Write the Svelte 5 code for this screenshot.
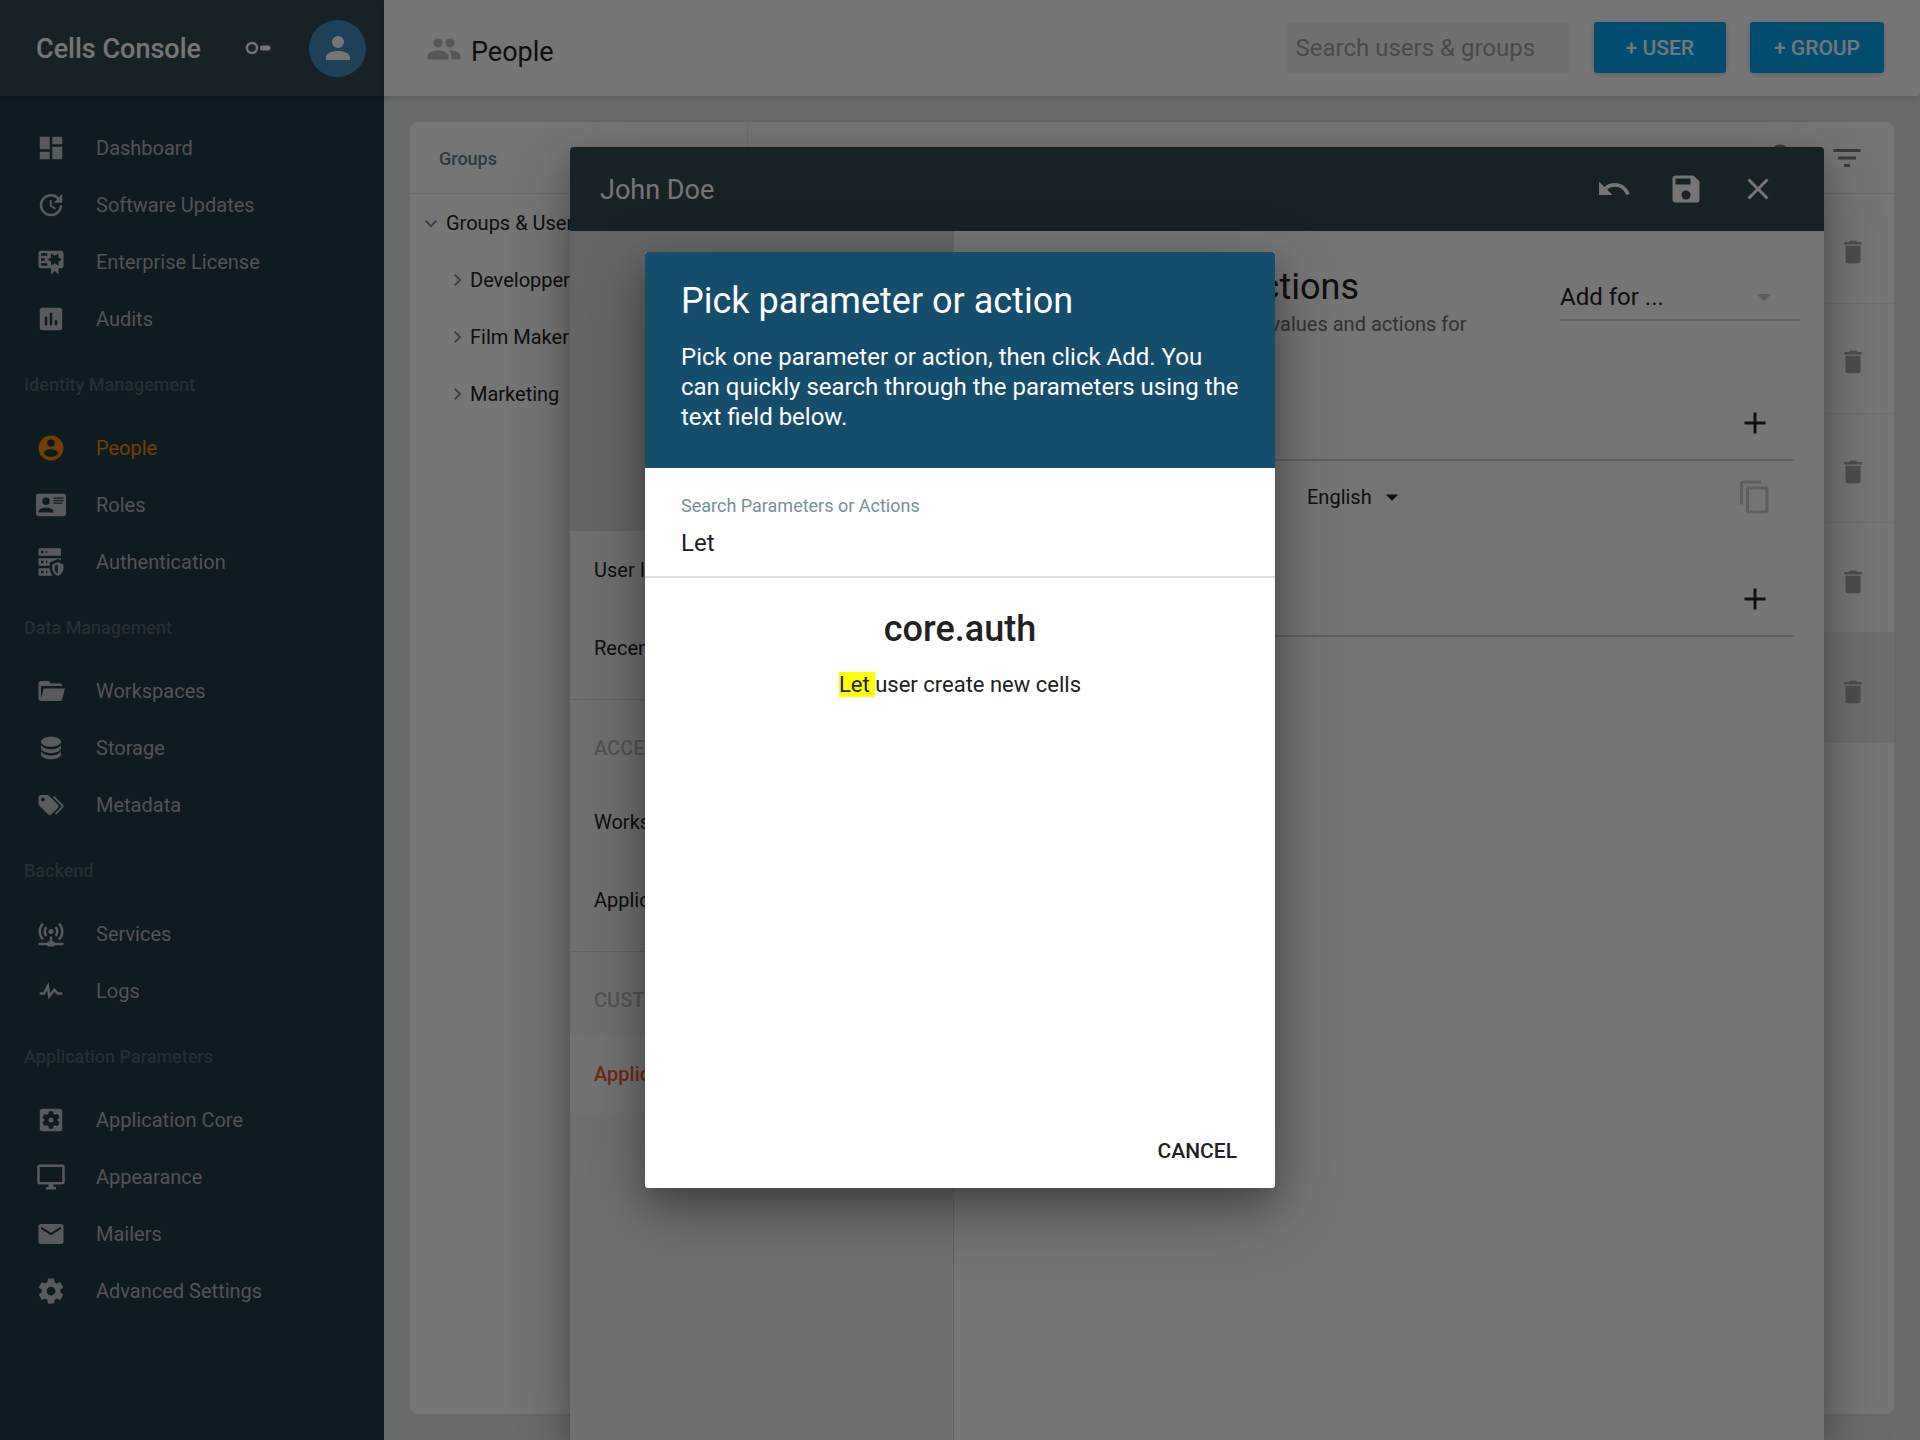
<script>
  const P = {
    dashboard: 'M13,3V9H21V3M13,21H21V11H13M3,21H11V15H3M3,13H11V3H3V13Z',
    update: 'M21,10.12H14.22L16.96,7.3C14.23,4.6 9.81,4.5 7.08,7.2C4.35,9.91 4.35,14.28 7.08,17C9.81,19.7 14.23,19.7 16.96,17C18.32,15.65 19,14.08 19,12.1H21C21,14.08 20.12,16.65 18.36,18.39C14.85,21.87 9.15,21.87 5.64,18.39C2.14,14.92 2.11,9.28 5.62,5.81C9.13,2.34 14.76,2.34 18.27,5.81L21,3V10.12M12.5,8V12.25L16,14.33L15.28,15.54L11,13V8H12.5Z',
    certificate: 'M4,3C2.89,3 2,3.89 2,5V15A2,2 0 0,0 4,17H12V22L15,19L18,22V17H20A2,2 0 0,0 22,15V5A2,2 0 0,0 20,3H4M12,5L15,7L18,5V8.5L21,10L18,11.5V15L15,13L12,15V11.5L9,10L12,8.5V5M4,5H9V7H4V5M4,9H7V11H4V9M4,13H9V15H4V13Z',
    chart: 'M9,17H7V10H9V17M13,17H11V7H13V17M17,17H15V13H17V17M19,3H5C3.89,3 3,3.89 3,5V19A2,2 0 0,0 5,21H19A2,2 0 0,0 21,19V5C21,3.89 20.1,3 19,3Z',
    account: 'M12,19.2C9.5,19.2 7.29,17.92 6,16C6.03,14 10,12.9 12,12.9C14,12.9 17.97,14 18,16C16.71,17.92 14.5,19.2 12,19.2M12,5A3,3 0 0,1 15,8A3,3 0 0,1 12,11A3,3 0 0,1 9,8A3,3 0 0,1 12,5M12,2A10,10 0 0,0 2,12A10,10 0 0,0 12,22A10,10 0 0,0 22,12C22,6.47 17.5,2 12,2Z',
    card: 'M2,3H22C23.05,3 24,3.95 24,5V19C24,20.05 23.05,21 22,21H2C0.95,21 0,20.05 0,19V5C0,3.95 0.95,3 2,3M14,6V7H22V6H14M14,8V9H22V8H14M14,10V11H21V10H14M8,13.91C6,13.91 2,15 2,17V18H14V17C14,15 10,13.91 8,13.91M8,6A3,3 0 0,0 5,9A3,3 0 0,0 8,12A3,3 0 0,0 11,9A3,3 0 0,0 8,6Z',
    server: 'M3,1H19A1,1 0 0,1 20,2V6A1,1 0 0,1 19,7H3A1,1 0 0,1 2,6V2A1,1 0 0,1 3,1M3,9H19A1,1 0 0,1 20,10V10.67L17.5,9.56L11,12.44V15H3A1,1 0 0,1 2,14V10A1,1 0 0,1 3,9M3,17H11C11.06,19.25 12,21.4 13.46,23H3A1,1 0 0,1 2,22V18A1,1 0 0,1 3,17M8,5H9V3H8V5M8,13H9V11H8V13M8,21H9V19H8V21M4,3V5H6V3H4M4,11V13H6V11H4M4,19V21H6V19H4M17.5,12L22,14V17C22,19.78 20.08,22.37 17.5,23C14.92,22.37 13,19.78 13,17V14L17.5,12M17.5,13.94L15,15.06V17.72C15,19.26 16.07,20.7 17.5,21.06V13.94Z',
    folder: 'M19,20H4C2.89,20 2,19.1 2,18V6C2,4.89 2.89,4 4,4H10L12,6H19A2,2 0 0,1 21,8L4,8V18L6.14,10H23.21L20.93,18.5C20.7,19.37 19.92,20 19,20Z',
    database: 'M12,3C7.58,3 4,4.79 4,7C4,9.21 7.58,11 12,11C16.42,11 20,9.21 20,7C20,4.79 16.42,3 12,3M4,9V12C4,14.21 7.58,16 12,16C16.42,16 20,14.21 20,12V9C20,11.21 16.42,13 12,13C7.58,13 4,11.21 4,9M4,14V17C4,19.21 7.58,21 12,21C16.42,21 20,19.21 20,17V14C20,16.21 16.42,18 12,18C7.58,18 4,16.21 4,14Z',
    tags: 'M5.5,9A1.5,1.5 0 0,0 7,7.5A1.5,1.5 0 0,0 5.5,6A1.5,1.5 0 0,0 4,7.5A1.5,1.5 0 0,0 5.5,9M17.41,11.58C17.77,11.94 18,12.44 18,13C18,13.55 17.78,14.05 17.41,14.41L12.41,19.41C12.05,19.77 11.55,20 11,20C10.45,20 9.95,19.78 9.58,19.41L2.59,12.42C2.22,12.05 2,11.55 2,11V6C2,4.89 2.89,4 4,4H9C9.55,4 10.05,4.22 10.41,4.58L17.41,11.58M13.54,5.71L14.54,4.71L21.41,11.58C21.78,11.94 22,12.45 22,13C22,13.55 21.78,14.05 21.42,14.41L16.04,19.79L15.04,18.79L20.75,13L13.54,5.71Z',
    services: 'M4.93,2.93C3.12,4.74 2,7.24 2,10C2,12.76 3.12,15.26 4.93,17.07L6.34,15.66C4.89,14.22 4,12.22 4,10C4,7.79 4.89,5.78 6.34,4.34L4.93,2.93M19.07,2.93L17.66,4.34C19.11,5.78 20,7.79 20,10C20,12.22 19.11,14.22 17.66,15.66L19.07,17.07C20.88,15.26 22,12.76 22,10C22,7.24 20.88,4.74 19.07,2.93M7.76,5.76C6.67,6.85 6,8.35 6,10C6,11.65 6.67,13.15 7.76,14.24L9.17,12.83C8.45,12.11 8,11.11 8,10C8,8.89 8.45,7.89 9.17,7.17L7.76,5.76M16.24,5.76L14.83,7.17C15.55,7.89 16,8.89 16,10C16,11.11 15.55,12.11 14.83,12.83L16.24,14.24C17.33,13.15 18,11.65 18,10C18,8.35 17.33,6.85 16.24,5.76M12,8A2,2 0 0,0 10,10A2,2 0 0,0 12,12A2,2 0 0,0 14,10A2,2 0 0,0 12,8M11,14V18H10A1,1 0 0,0 9,19H2V21H9A1,1 0 0,0 10,22H14A1,1 0 0,0 15,21H22V19H15A1,1 0 0,0 14,18H13V14H11Z',
    pulse: 'M3,13H5.79L10.1,4.79L11.28,13.75L14.5,9.66L17.83,13H21V15H17L14.67,12.67L9.92,18.73L8.94,11.31L7,15H3V13Z',
    gearbox: 'M17.25,12C17.25,12.23 17.23,12.46 17.2,12.68L18.68,13.84C18.81,13.95 18.85,14.13 18.76,14.29L17.36,16.71C17.27,16.86 17.09,16.92 16.93,16.86L15.19,16.16C14.83,16.44 14.43,16.67 14,16.85L13.75,18.7C13.72,18.87 13.57,19 13.4,19H10.6C10.43,19 10.28,18.87 10.25,18.7L10,16.85C9.56,16.67 9.17,16.44 8.81,16.16L7.07,16.86C6.91,16.92 6.73,16.86 6.64,16.71L5.24,14.29C5.15,14.13 5.19,13.95 5.32,13.84L6.8,12.68C6.77,12.46 6.75,12.23 6.75,12C6.75,11.77 6.77,11.54 6.8,11.32L5.32,10.16C5.19,10.05 5.15,9.86 5.24,9.71L6.64,7.29C6.73,7.13 6.91,7.07 7.07,7.13L8.81,7.84C9.17,7.56 9.56,7.32 10,7.15L10.25,5.29C10.28,5.13 10.43,5 10.6,5H13.4C13.57,5 13.72,5.13 13.75,5.29L14,7.15C14.43,7.32 14.83,7.56 15.19,7.84L16.93,7.13C17.09,7.07 17.27,7.13 17.36,7.29L18.76,9.71C18.85,9.86 18.81,10.05 18.68,10.16L17.2,11.32C17.23,11.54 17.25,11.77 17.25,12M19,3H5C3.89,3 3,3.89 3,5V19A2,2 0 0,0 5,21H19A2,2 0 0,0 21,19V5C21,3.89 20.1,3 19,3M12,10C10.89,10 10,10.89 10,12A2,2 0 0,0 12,14A2,2 0 0,0 14,12C14,10.89 13.1,10 12,10Z',
    monitor: 'M21,2H3A2,2 0 0,0 1,4V16A2,2 0 0,0 3,18H10V20H8V22H16V20H14V18H21A2,2 0 0,0 23,16V4A2,2 0 0,0 21,2M21,16H3V4H21V16Z',
    mail: 'M20,8L12,13L4,8V6L12,11L20,6V8M20,4H4C2.89,4 2,4.89 2,6V18A2,2 0 0,0 4,20H20A2,2 0 0,0 22,18V6C22,4.89 21.1,4 20,4Z',
    gear: 'M12,15.5A3.5,3.5 0 0,1 8.5,12A3.5,3.5 0 0,1 12,8.5A3.5,3.5 0 0,1 15.5,12A3.5,3.5 0 0,1 12,15.5M19.43,12.97C19.47,12.65 19.5,12.33 19.5,12C19.5,11.67 19.47,11.34 19.43,11L21.54,9.37C21.73,9.22 21.78,8.95 21.66,8.73L19.66,5.27C19.54,5.05 19.27,4.96 19.05,5.05L16.56,6.05C16.04,5.66 15.5,5.32 14.87,5.07L14.5,2.42C14.46,2.18 14.25,2 14,2H10C9.75,2 9.54,2.18 9.5,2.42L9.13,5.07C8.5,5.32 7.96,5.66 7.44,6.05L4.95,5.05C4.73,4.96 4.46,5.05 4.34,5.27L2.34,8.73C2.21,8.95 2.27,9.22 2.46,9.37L4.57,11C4.53,11.34 4.5,11.67 4.5,12C4.5,12.33 4.53,12.65 4.57,12.97L2.46,14.63C2.27,14.78 2.21,15.05 2.34,15.27L4.34,18.73C4.46,18.95 4.73,19.03 4.95,18.95L7.44,17.94C7.96,18.34 8.5,18.68 9.13,18.93L9.5,21.58C9.54,21.82 9.75,22 10,22H14C14.25,22 14.46,21.82 14.5,21.58L14.87,18.93C15.5,18.67 16.04,18.34 16.56,17.94L19.05,18.95C19.27,19.03 19.54,18.95 19.66,18.73L21.66,15.27C21.78,15.05 21.73,14.78 21.54,14.63L19.43,12.97Z',
    people: 'M16,13C15.71,13 15.38,13 15.03,13.05C16.19,13.89 17,15 17,16.5V19H23V16.5C23,14.17 18.33,13 16,13M8,13C5.67,13 1,14.17 1,16.5V19H15V16.5C15,14.17 10.33,13 8,13M8,11A3,3 0 0,0 11,8A3,3 0 0,0 8,5A3,3 0 0,0 5,8A3,3 0 0,0 8,11M16,11A3,3 0 0,0 19,8A3,3 0 0,0 16,5A3,3 0 0,0 13,8A3,3 0 0,0 16,11Z',
    person: 'M12,4A4,4 0 0,1 16,8A4,4 0 0,1 12,12A4,4 0 0,1 8,8A4,4 0 0,1 12,4M12,14C16.42,14 20,15.79 20,18V20H4V18C4,15.79 7.58,14 12,14Z',
    undo: 'M12.5,8C9.85,8 7.45,9 5.6,10.6L2,7V16H11L7.38,12.38C8.77,11.22 10.54,10.5 12.5,10.5C16.04,10.5 19.05,12.81 20.1,16L22.47,15.22C21.08,11.03 17.15,8 12.5,8Z',
    save: 'M15,9H5V5H15V9M12,19A3,3 0 0,1 9,16A3,3 0 0,1 12,13A3,3 0 0,1 15,16A3,3 0 0,1 12,19M17,3H5C3.89,3 3,3.9 3,5V19A2,2 0 0,0 5,21H19A2,2 0 0,0 21,19V7L17,3Z',
    close: 'M19,6.41L17.59,5L12,10.59L6.41,5L5,6.41L10.59,12L5,17.59L6.41,19L12,13.41L17.59,19L19,17.59L13.41,12L19,6.41Z',
    trash: 'M19,4H15.5L14.5,3H9.5L8.5,4H5V6H19V4M6,19A2,2 0 0,0 8,21H16A2,2 0 0,0 18,19V7H6V19Z',
    filter: 'M6,13H18V11H6V13M3,6V8H21V6H3M10,18H14V16H10V18Z',
    search: 'M9.5,3A6.5,6.5 0 0,1 16,9.5C16,11.11 15.41,12.59 14.44,13.73L14.71,14H15.5L20.5,19L19,20.5L14,15.5V14.71L13.73,14.44C12.59,15.41 11.11,16 9.5,16A6.5,6.5 0 0,1 3,9.5A6.5,6.5 0 0,1 9.5,3M9.5,5C7,5 5,7 5,9.5C5,12 7,14 9.5,14C12,14 14,12 14,9.5C14,7 12,5 9.5,5Z',
    copy: 'M19,21H8V7H19V21M19,5H8A2,2 0 0,0 6,7V21A2,2 0 0,0 8,23H19A2,2 0 0,0 21,21V7A2,2 0 0,0 19,5M16,1H4A2,2 0 0,0 2,3V17H4V3H16V1Z',
    plus: 'M19,13H13V19H11V13H5V11H11V5H13V11H19V13Z',
    chevronDown: 'M5,7.6L12,14.6L19,7.6L21,9.6L12,18.6L3,9.6Z',
    chevronRight: 'M7.6,5L14.6,12L7.6,19L9.6,21L18.6,12L9.6,3Z',
    caret: 'M7,10L12,15L17,10H7Z'
  };

  const menu = [
    { items: [['Dashboard', 'dashboard'], ['Software Updates', 'update'], ['Enterprise License', 'certificate'], ['Audits', 'chart']] },
    { title: 'Identity Management', items: [['People', 'account'], ['Roles', 'card'], ['Authentication', 'server']] },
    { title: 'Data Management', items: [['Workspaces', 'folder'], ['Storage', 'database'], ['Metadata', 'tags']] },
    { title: 'Backend', items: [['Services', 'services'], ['Logs', 'pulse']] },
    { title: 'Application Parameters', items: [['Application Core', 'gearbox'], ['Appearance', 'monitor'], ['Mailers', 'mail'], ['Advanced Settings', 'gear']] }
  ];
  const groups = ['Developpers', 'Film Makers', 'Marketing'];
  const rows = [1, 2, 3, 4, 5];
  const editorNav = [
    { items: ['User Information', 'Recent Activity'] },
    { title: 'ACCESS CONTROL', items: ['Workspaces', 'Application Pages'] },
    { title: 'CUSTOMIZATION', items: ['Application Parameters'] }
  ];
  let current = $state('People');
  let query = $state('Let');
</script>

{#snippet icon(name)}
  <svg class="icon" viewBox="0 0 24 24" aria-hidden="true"><path fill-rule="evenodd" d={P[name]} /></svg>
{/snippet}

<div class="page">
  <aside class="sidebar">
    <header class="brand">
      <h1>Cells Console</h1>
      <button class="plain key" aria-label="Toggle menu">
        <svg viewBox="0 0 26 14" aria-hidden="true"><circle cx="7" cy="7" r="5" fill="none" stroke="#fff" stroke-width="2.4" /><rect x="15" y="4.5" width="10.5" height="5" rx="2" fill="#fff" /></svg>
      </button>
      <button class="plain avatar" aria-label="Account">{@render icon('person')}</button>
    </header>
    <nav class="menu">
      {#each menu as section}
        {#if section.title}<h2>{section.title}</h2>{/if}
        {#each section.items as [label, glyph]}
          <a href="#menu" class:current={label === current} onclick={() => (current = label)}>{@render icon(glyph)}<span>{label}</span></a>
        {/each}
      {/each}
    </nav>
  </aside>

  <main>
    <header class="topbar">
      <div class="heading">{@render icon('people')}<h2>People</h2></div>
      <input type="search" placeholder="Search users &amp; groups" aria-label="Search users and groups" />
      <button class="cta">+ USER</button>
      <button class="cta">+ GROUP</button>
    </header>
    <section class="card">
      <div class="tree">
        <h3>Groups</h3>
        <ul>
          <li class="root">{@render icon('chevronDown')}<span>Groups &amp; Users</span></li>
          {#each groups as group}
            <li>{@render icon('chevronRight')}<span>{group}</span></li>
          {/each}
        </ul>
      </div>
      <div class="list">
        <div class="tools">
          <button class="plain" aria-label="Search">{@render icon('search')}</button>
          <button class="plain" aria-label="Filter">{@render icon('filter')}</button>
        </div>
        <div class="users">
          {#each rows as row}
            <div class="user" class:selected={row === 5}><button class="plain" aria-label="Delete user {row}">{@render icon('trash')}</button></div>
          {/each}
        </div>
      </div>
    </section>
  </main>

  <section class="editor" aria-label="User editor">
    <header>
      <h2>John Doe</h2>
      <button class="plain" aria-label="Undo">{@render icon('undo')}</button>
      <button class="plain" aria-label="Save">{@render icon('save')}</button>
      <button class="plain" aria-label="Close">{@render icon('close')}</button>
    </header>
    <div class="body">
      <nav class="pages">
        <div class="portrait"></div>
        {#each editorNav as part}
          <div class="part">
            {#if part.title}<h3>{part.title}</h3>{/if}
            {#each part.items as item}
              <a href="#editor" class:active={item === 'Application Parameters'}>{item}</a>
            {/each}
          </div>
        {/each}
      </nav>
      <div class="pane">
        <div class="intro">
          <div>
            <h2>Parameters and Actions</h2>
            <p>Override your default parameters values and actions for this user</p>
          </div>
          <label class="addfor">
            <select aria-label="Add for"><option>Add for ...</option></select>
            {@render icon('caret')}
          </label>
        </div>
        <div class="line"><button class="plain" aria-label="Add parameter">{@render icon('plus')}</button></div>
        <div class="line language">
          <label>
            <select aria-label="Language"><option>English</option></select>
            {@render icon('caret')}
          </label>
          <button class="plain copy" aria-label="Copy">{@render icon('copy')}</button>
        </div>
        <div class="line"><button class="plain" aria-label="Add action">{@render icon('plus')}</button></div>
      </div>
    </div>
  </section>

  <div class="overlay">
    <div class="dialog" role="dialog" aria-labelledby="dialog-title">
      <header>
        <h2 id="dialog-title">Pick parameter or action</h2>
        <p>Pick one parameter or action, then click Add. You can quickly search through the parameters using the text field below.</p>
      </header>
      <div class="search">
        <label for="param-search">Search Parameters or Actions</label>
        <input id="param-search" type="text" bind:value={query} />
      </div>
      <div class="results">
        <h3>core.auth</h3>
        <p><mark>Let&nbsp;</mark>user create new cells</p>
      </div>
      <footer><button class="plain">CANCEL</button></footer>
    </div>
  </div>
</div>

<style>
  :global(body) { margin: 0; font-family: Roboto, "Liberation Sans", sans-serif; }
  * { box-sizing: border-box; }
  h1, h2, h3, p, ul { margin: 0; padding: 0; }
  button, input, select { font: inherit; color: inherit; }
  a { text-decoration: none; color: inherit; }
  .icon { display: block; width: 36px; height: 36px; fill: currentColor; flex: none; }
  .plain { border: 0; background: none; padding: 0; display: flex; align-items: center; justify-content: center; }

  .page { position: relative; display: flex; height: 100vh; overflow: hidden; background: #e9ebef; font-size: 20px; color: #212121; }

  .sidebar { width: 384px; flex: none; background: #1f3b49; color: #b0b5b8; }
  .brand { height: 96px; display: flex; align-items: center; padding: 0 18px 0 36px; background: #344a56; color: #fff; box-shadow: 0 2px 8px rgba(0, 0, 0, .3); }
  .brand h1 { flex: 1; padding-top: 2px; font-size: 27px; font-weight: 500; }
  .key { width: 26px; margin-right: 38px; }
  .key svg { width: 26px; height: 14px; }
  .avatar { width: 57px; height: 57px; border-radius: 50%; background: #4190bf; }
  .menu { padding-top: 23px; }
  .menu a { display: flex; align-items: center; height: 57px; padding-left: 36px; gap: 30px; }
  .menu .icon { width: 30px; height: 30px; color: #c0c6ca; }
  .menu a.current, .menu a.current .icon { color: #ff8800; }
  .menu h2 { height: 72px; line-height: 76px; padding-left: 24px; font-size: 18px; font-weight: 500; color: #526570; }

  main { flex: 1; min-width: 0; display: flex; flex-direction: column; }
  .topbar { height: 96px; display: flex; align-items: center; gap: 24px; padding: 0 36px 2px 42px; background: #fff; box-shadow: 0 2px 8px rgba(0, 0, 0, .16); border-bottom-right-radius: 3px; }
  .heading { flex: 1; display: flex; align-items: center; gap: 9px; padding-top: 3px; }
  .heading .icon { color: #bdbdbd; }
  .heading h2 { font-size: 27px; font-weight: 400; padding-top: 6px; }
  .topbar input { width: 285px; height: 51px; padding: 2px 11px 0; border: 0; border-radius: 4px; background: #f4f4f4; font-size: 24px; }
  .topbar input::placeholder { color: #a2a2a2; opacity: 1; }
  .cta { height: 51px; padding: 2px 32px 0; margin: 0; border: 0; border-radius: 3px; background: #03a9f4; color: #fff; font-size: 21px; font-weight: 500; box-shadow: 0 1px 5px rgba(0, 0, 0, .2); }
  .cta + .cta { padding: 2px 24px 0; }

  .card { flex: 1; display: flex; margin: 24px; border: 2px solid #e0e3e7; border-radius: 9px; background: #fff; overflow: hidden; }
  .tree { width: 338px; border-right: 1px solid #ececec; }
  .tree h3 { height: 72px; padding-left: 29px; line-height: 73px; font-size: 18px; font-weight: 500; color: #607d8b; border-bottom: 1px solid #e6e6e6; }
  .tree ul { list-style: none; }
  .tree li { height: 57px; display: flex; align-items: center; gap: 5px; padding-left: 39px; }
  .tree li.root { padding-left: 13px; gap: 7px; }
  .tree .icon { width: 16px; height: 16px; color: #8a8a8a; }
  .list { flex: 1; }
  .tools { height: 72px; display: flex; align-items: center; justify-content: flex-end; gap: 27px; padding-right: 29px; border-bottom: 1px solid #e6e6e6; color: #7c7c7c; }
  .users { display: grid; grid-template-rows: repeat(5, 1fr); height: 549px; }
  .user { display: flex; align-items: center; justify-content: flex-end; padding: 8px 26px 0 0; border-bottom: 1px solid #f0f0f0; color: #a8a8a8; }
  .user .icon { width: 30px; height: 30px; }
  .selected { background: #f0f0f0; }

  .editor { position: absolute; inset: 147px 96px 0 570px; display: flex; flex-direction: column; border-radius: 4px 4px 0 0; background: #fff; box-shadow: 0 21px 68px rgba(0, 0, 0, .25), 0 12px 27px rgba(0, 0, 0, .22); }
  .editor > header { height: 84px; display: flex; align-items: center; padding: 0 30px; background: #344a56; color: #fff; border-radius: 4px 4px 0 0; }
  .editor > header h2 { flex: 1; padding-top: 2px; font-size: 27px; font-weight: 400; }
  .editor > header button { width: 72px; height: 72px; }
  .body { flex: 1; display: flex; }
  .pages { width: 384px; flex: none; background: #f5f5f5; border-right: 1px solid #dcdcdc; }
  .portrait { height: 300px; background: #dfdfdf; }
  .part { padding-bottom: 12px; }
  .part + .part { border-top: 1px solid #dadada; }
  .pages a { display: flex; align-items: center; height: 78px; padding-left: 24px; }
  .pages a.active { background: #fafafa; color: #ff5722; font-weight: 500; }
  .pages h3 { height: 83px; line-height: 73px; padding: 12px 0 0 24px; font-size: 20px; font-weight: 500; color: #b8b8b8; }
  .pane { flex: 1; }
  .intro { display: flex; justify-content: space-between; padding: 30px 24px 0 20px; height: 156px; }
  .intro h2 { padding-top: 2px; font-size: 36px; line-height: 48px; font-weight: 400; }
  .intro p { width: 510px; line-height: 27px; color: #6c6c6c; }
  .addfor { position: relative; width: 240px; height: 60px; font-size: 24px; border-bottom: 2px solid #d4d4d4; }
  .pane select { appearance: none; border: 0; padding: 0; margin: 0; background: none; width: 100%; }
  .addfor select { height: 72px; }
  .addfor .icon { position: absolute; right: 18px; top: 18px; color: #d0d0d0; }
  .line { display: flex; align-items: center; justify-content: flex-end; height: 74px; margin: 0 30px 0 30px; padding-right: 21px; border-bottom: 2px solid #d4d4d4; }
  .language { height: 102px; border: 0; align-items: flex-start; padding-top: 18px; }
  .language label { display: flex; align-items: center; width: 100px; height: 36px; margin-right: 330px; }
  .language .icon { width: 30px; height: 30px; }
  .copy { color: #d0d0d0; }
  .language .copy .icon { width: 36px; height: 36px; }

  .overlay { position: absolute; inset: 0; display: flex; align-items: center; justify-content: center; background: rgba(0, 0, 0, .54); }
  .dialog { width: 630px; min-height: 936px; display: flex; flex-direction: column; background: #fff; border-radius: 3px; overflow: hidden; box-shadow: 0 21px 68px rgba(0, 0, 0, .3), 0 15px 30px rgba(0, 0, 0, .22); }
  .dialog header { height: 216px; padding: 25px 36px 0; background: #144e6c; color: #fff; }
  .dialog h2 { font-size: 36px; line-height: 48px; font-weight: 400; }
  .dialog header p { margin-top: 17px; font-size: 24px; line-height: 30px; }
  .search { height: 110px; padding: 27px 36px 0; border-bottom: 2px solid #e0e0e0; }
  .search label { display: block; font-size: 18px; line-height: 22px; color: #78909c; }
  .search input { width: 100%; height: 36px; margin-top: 8px; padding: 0; border: 0; outline: 0; font-size: 24px; background: none; }
  .results { flex: 1; padding-top: 27px; text-align: center; font-size: 22px; }
  .results h3 { font-size: 36px; line-height: 48px; font-weight: 500; }
  .results p { margin-top: 17px; line-height: 30px; }
  mark { background: #ff0; color: inherit; }
  .dialog footer { display: flex; justify-content: flex-end; padding: 0 38px 23px; }
  .dialog footer button { height: 28px; font-size: 21px; font-weight: 500; }
</style>
